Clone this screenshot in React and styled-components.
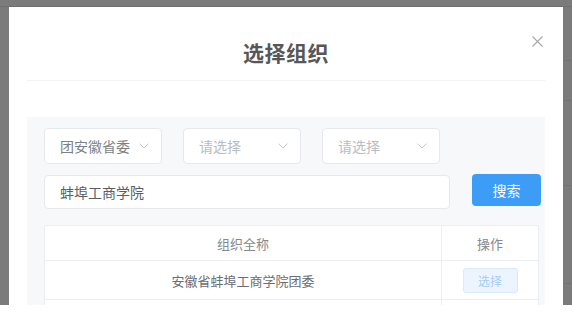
import React from "react";
import styled, { createGlobalStyle } from "styled-components";

const Global = createGlobalStyle`
  html, body { margin: 0; padding: 0; background: #ffffff; overflow: hidden; }
  * { box-sizing: border-box; }
  body { font-family: "Noto Sans CJK SC", "Noto Sans", "Liberation Sans", sans-serif; }
`;

const Page = styled.div`
  width: 572px;
  height: 317px;
  background: #ffffff;
`;

const Overlay = styled.div`
  height: 305px;
  padding: 7px 0 0 9px;
  overflow: hidden;
  background-color: #7b7b7b;
  background-image:
    linear-gradient(#6f6f6f, #6f6f6f),
    linear-gradient(#727272, #727272),
    linear-gradient(#727272, #727272),
    linear-gradient(#727272, #727272),
    linear-gradient(#727272, #727272);
  background-repeat: no-repeat;
  background-size: 572px 1px, 20px 1px, 20px 1px, 20px 1px, 20px 1px;
  background-position: 0 6px, 552px 60px, 552px 100px, 552px 185px, 552px 283px;
`;

const Modal = styled.div`
  position: relative;
  width: 554px;
  height: 298px;
  background: #ffffff;
  padding: 0 18px;
`;

const Header = styled.div`
  height: 74px;
  padding-top: 31px;
  border-bottom: 1px solid #f3f3f3;
  text-align: center;
`;

const Title = styled.div`
  font-size: 21px;
  line-height: 29px;
  font-weight: 700;
  color: #575757;
  letter-spacing: 0.5px;
`;

const Close = styled.button`
  position: absolute;
  top: 27px;
  right: 19px;
  width: 14px;
  height: 14px;
  padding: 0;
  border: none;
  background: transparent;
  display: flex;
  align-items: center;
  justify-content: center;
`;

const Panel = styled.div`
  margin-top: 36px;
  height: 200px;
  background: #f7f8fa;
  padding: 11px 4px 0 17px;
`;

const FilterRow = styled.div`
  display: flex;
  gap: 21px;
`;

const Select = styled.div`
  width: 118px;
  height: 36px;
  background: #ffffff;
  border: 1px solid #e6e8ec;
  border-radius: 4px;
  display: flex;
  align-items: center;
  justify-content: space-between;
  padding: 0 12px 0 15px;
  font-size: 14px;
  color: ${(p) => (p.$placeholder ? "#b9bcc2" : "#7c7f85")};
`;

const SearchRow = styled.div`
  display: flex;
  align-items: flex-start;
  gap: 22px;
  margin-top: 11px;
`;

const Input = styled.div`
  width: 406px;
  height: 34px;
  background: #ffffff;
  border: 1px solid #e6e8ec;
  border-radius: 4px;
  display: flex;
  align-items: center;
  padding: 0 15px;
  font-size: 14px;
  color: #5a5d63;
`;

const SearchButton = styled.button`
  margin-top: -1px;
  width: 69px;
  height: 32px;
  border: none;
  border-radius: 4px;
  background: #3d9cf6;
  color: #ffffff;
  font-family: inherit;
  font-size: 14px;
`;

const Table = styled.div`
  margin-top: 16px;
  width: 495px;
  background: #ffffff;
  border: 1px solid #eceef2;
  border-bottom: none;
`;

const Row = styled.div`
  display: grid;
  grid-template-columns: 396px 1fr;
  height: ${(p) => (p.$head ? "35px" : "39px")};
  border-bottom: 1px solid #eceef2;
`;

const Cell = styled.div`
  display: flex;
  align-items: center;
  justify-content: center;
  font-size: 13px;
  color: ${(p) => (p.$head ? "#86898e" : "#6a6d72")};
  & + & { border-left: 1px solid #eceef2; }
`;

const PickButton = styled.button`
  width: 55px;
  height: 25px;
  border: 1px solid #d8eafc;
  border-radius: 3px;
  background: #ecf5ff;
  color: #a3cdf6;
  font-family: inherit;
  font-size: 12px;
  padding: 0;
`;

const Chevron = () => (
  <svg width="10" height="6" viewBox="0 0 10 6" fill="none">
    <path d="M0.6 0.6 L5 5 L9.4 0.6" stroke="#c3c6cc" strokeWidth="1" />
  </svg>
);

const CloseIcon = () => (
  <svg width="11" height="11" viewBox="0 0 11 11" fill="none">
    <path d="M0.5 0.5 L10.5 10.5 M10.5 0.5 L0.5 10.5" stroke="#a8a8a8" strokeWidth="1.1" />
  </svg>
);

const selects = [
  { label: "团安徽省委", placeholder: false },
  { label: "请选择", placeholder: true },
  { label: "请选择", placeholder: true },
];

export default function App() {
  return (
    <Page>
      <Global />
      <Overlay>
        <Modal>
          <Close aria-label="close">
            <CloseIcon />
          </Close>
          <Header>
            <Title>选择组织</Title>
          </Header>
          <Panel>
            <FilterRow>
              {selects.map((s, i) => (
                <Select key={i} $placeholder={s.placeholder}>
                  <span>{s.label}</span>
                  <Chevron />
                </Select>
              ))}
            </FilterRow>
            <SearchRow>
              <Input>蚌埠工商学院</Input>
              <SearchButton>搜索</SearchButton>
            </SearchRow>
            <Table>
              <Row $head>
                <Cell $head>组织全称</Cell>
                <Cell $head>操作</Cell>
              </Row>
              <Row>
                <Cell>安徽省蚌埠工商学院团委</Cell>
                <Cell>
                  <PickButton>选择</PickButton>
                </Cell>
              </Row>
              <Row>
                <Cell />
                <Cell />
              </Row>
            </Table>
          </Panel>
        </Modal>
      </Overlay>
    </Page>
  );
}
